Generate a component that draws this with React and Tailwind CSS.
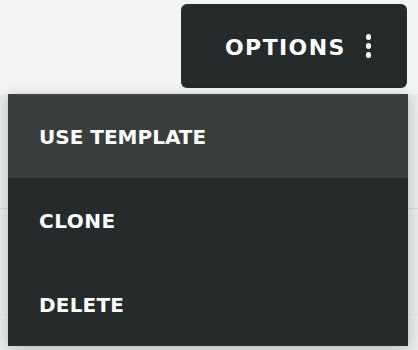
import React from "react";

export default function App() {
  const font = { fontFamily: '"DejaVu Sans", "Liberation Sans", Arial, sans-serif' };
  return (
    <div
      className="relative w-[418px] h-[350px] overflow-hidden bg-[#f3f4f6]"
      style={font}
    >
      {/* underlying page */}
      <div className="flex justify-end pt-[4px] pr-[11px]">
        <button className="flex items-center h-[84px] w-[226px] rounded-[6px] bg-[#242b2a] pl-[44px] text-white">
          <span className="text-[22px] font-bold tracking-[1.4px] leading-none mt-[3px]">
            OPTIONS
          </span>
          <span className="ml-[20px] flex flex-col gap-[3.5px]">
            <span className="block w-[5.5px] h-[5.5px] rounded-full bg-white" />
            <span className="block w-[5.5px] h-[5.5px] rounded-full bg-white" />
            <span className="block w-[5.5px] h-[5.5px] rounded-full bg-white" />
          </span>
        </button>
      </div>
      <div className="mt-[6px] h-[256px] bg-[#eaecec] flex flex-col">
        <div className="h-[115px] border-b border-[#d6d9da]" />
        <div className="h-[106px] border-b border-[#e0e2e3]" />
      </div>

      {/* dropdown menu */}
      <div className="absolute left-[8px] top-[94px] w-[400px] bg-[#242b2a] text-white shadow-[0_2px_12px_rgba(0,0,0,0.22)]">
        <div className="h-[84px] flex items-center pl-[31px] bg-[#383e3c]">
          <span className="text-[20px] font-bold tracking-[0px] leading-none mt-[1px]">
            USE TEMPLATE
          </span>
        </div>
        <div className="h-[84px] flex items-center pl-[31px]">
          <span className="text-[20px] font-bold tracking-[0.5px] leading-none mt-[1px]">
            CLONE
          </span>
        </div>
        <div className="h-[84px] flex items-center pl-[31px]">
          <span className="text-[20px] font-bold tracking-[0.2px] leading-none mt-[1px]">
            DELETE
          </span>
        </div>
      </div>
    </div>
  );
}
